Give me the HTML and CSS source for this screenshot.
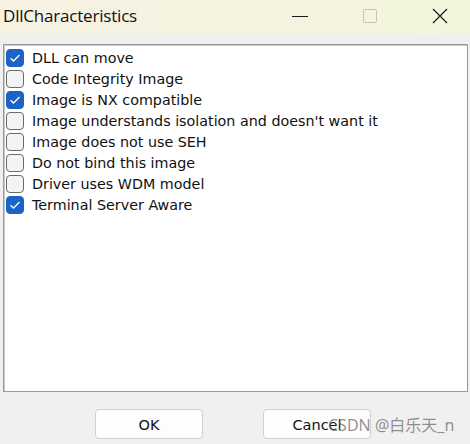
FILE: index.html
```html
<!DOCTYPE html>
<html>
<head>
<meta charset="utf-8">
<link rel="stylesheet" href="styles.css">
</head>
<body>
<div class="window">
  <div class="titlebar">
    <span class="title">DllCharacteristics</span>
    <div class="controls">
      <span class="ctl"><svg width="16" height="16" viewBox="0 0 16 16"><path d="M0 8.5H16" stroke="#1a1a1a" stroke-width="1"/></svg></span>
      <span class="ctl"><svg width="16" height="16" viewBox="0 0 16 16"><rect x="1.5" y="1.5" width="13" height="13" rx="1.5" fill="none" stroke="#c4c4bc" stroke-width="1"/></svg></span>
      <span class="ctl"><svg width="16" height="16" viewBox="0 0 16 16"><path d="M1 1L15 15M15 1L1 15" stroke="#1a1a1a" stroke-width="1.2"/></svg></span>
    </div>
  </div>
  <div class="content">
    <div class="listbox">
      <label class="item"><span class="box checked"><svg width="12" height="10" viewBox="0 0 12 10"><path d="M1.5 5.2L4.5 8L10.5 2" fill="none" stroke="#fff" stroke-width="1.3"/></svg></span>DLL can move</label>
      <label class="item"><span class="box"></span>Code Integrity Image</label>
      <label class="item"><span class="box checked"><svg width="12" height="10" viewBox="0 0 12 10"><path d="M1.5 5.2L4.5 8L10.5 2" fill="none" stroke="#fff" stroke-width="1.3"/></svg></span>Image is NX compatible</label>
      <label class="item"><span class="box"></span>Image understands isolation and doesn't want it</label>
      <label class="item"><span class="box"></span>Image does not use SEH</label>
      <label class="item"><span class="box"></span>Do not bind this image</label>
      <label class="item"><span class="box"></span>Driver uses WDM model</label>
      <label class="item"><span class="box checked"><svg width="12" height="10" viewBox="0 0 12 10"><path d="M1.5 5.2L4.5 8L10.5 2" fill="none" stroke="#fff" stroke-width="1.3"/></svg></span>Terminal Server Aware</label>
    </div>
    <div class="buttons">
      <button class="btn">OK</button>
      <button class="btn">Cancel</button>
      <span class="watermark">CSDN @白乐天_n</span>
    </div>
  </div>
</div>
</body>
</html>
```
FILE: styles.css
```css
html, body {
  margin: 0;
  padding: 0;
  width: 470px;
  height: 444px;
  overflow: hidden;
  background: #f0f0f0;
}
.window {
  width: 470px;
  height: 444px;
  display: flex;
  flex-direction: column;
}
.titlebar {
  height: 34px;
  box-sizing: border-box;
  padding-bottom: 3px;
  background: linear-gradient(90deg, #f8f2e3 0%, #f5f3e0 50%, #f3f6dc 100%);
  display: flex;
  align-items: center;
  justify-content: space-between;
  font-family: "Open Sans", "Noto Sans", sans-serif;
}
.title {
  font-size: 17px;
  color: #111;
  padding-left: 3px;
  letter-spacing: -0.2px;
}
.controls {
  display: flex;
  height: 31px;
  margin-right: -5px;
}
.ctl {
  width: 70px;
  display: flex;
  align-items: center;
  justify-content: center;
}
.content {
  flex: 1;
  display: flex;
  flex-direction: column;
  padding: 10px 2px 0 3px;
}
.listbox {
  height: 344px;
  background: #fff;
  border: 1px solid #9a9a9a;
  box-shadow: inset 1px 1px 0 #c8c8c8;
  padding: 2px 0 0 2px;
  display: flex;
  flex-direction: column;
}
.item {
  height: 21px;
  display: flex;
  align-items: center;
  font-family: "DejaVu Sans", sans-serif;
  font-size: 14.3px;
  color: #111;
}
.box {
  width: 18px;
  height: 18px;
  box-sizing: border-box;
  border: 1px solid #6a6a6a;
  border-radius: 4px;
  background: #f4f4f4;
  margin-right: 8px;
  display: flex;
  align-items: center;
  justify-content: center;
}
.box.checked {
  background: #1b63c6;
  border-color: #1b63c6;
}
.buttons {
  position: relative;
  display: flex;
  padding-top: 17px;
  padding-left: 92px;
  gap: 60px;
}
.btn {
  width: 108px;
  height: 30px;
  background: #fdfdfd;
  border: 1px solid #d0d0d0;
  border-radius: 4px;
  font-family: "DejaVu Sans", sans-serif;
  font-size: 14.5px;
  color: #111;
  padding: 0;
  padding-top: 1px;
}
.watermark {
  position: absolute;
  left: 325px;
  top: 20px;
  font-family: "Noto Sans", "Noto Sans CJK SC", sans-serif;
  font-size: 16px;
  color: rgba(110, 110, 110, 0.75);
}
```
